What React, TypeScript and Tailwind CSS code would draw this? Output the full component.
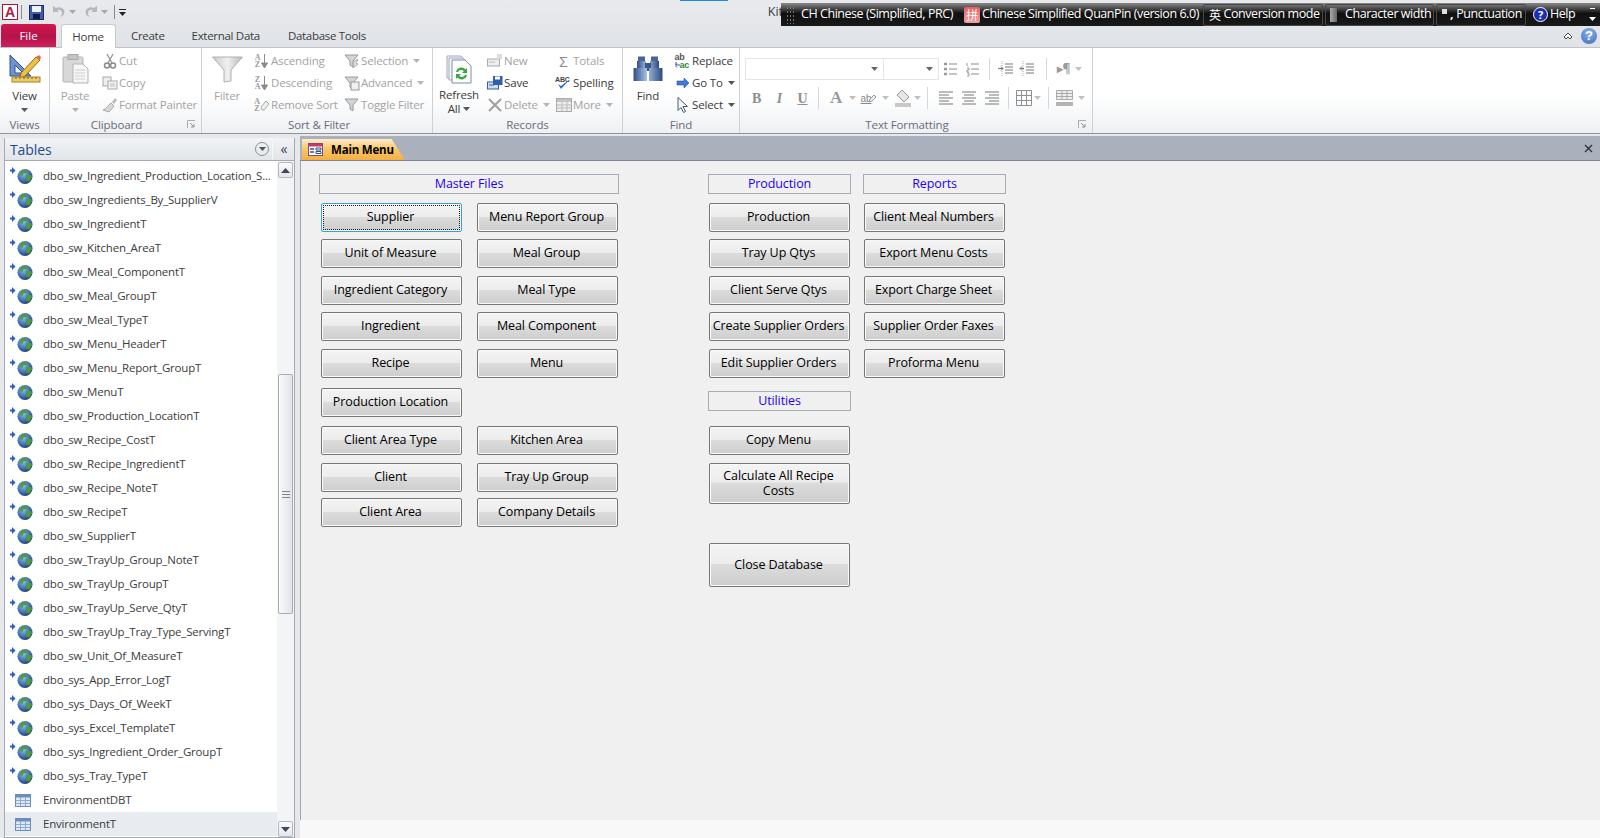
import React, { FC, ReactNode } from "react";

const tables = [
  "dbo_sw_Ingredient_Production_Location_S...",
  "dbo_sw_Ingredients_By_SupplierV",
  "dbo_sw_IngredientT",
  "dbo_sw_Kitchen_AreaT",
  "dbo_sw_Meal_ComponentT",
  "dbo_sw_Meal_GroupT",
  "dbo_sw_Meal_TypeT",
  "dbo_sw_Menu_HeaderT",
  "dbo_sw_Menu_Report_GroupT",
  "dbo_sw_MenuT",
  "dbo_sw_Production_LocationT",
  "dbo_sw_Recipe_CostT",
  "dbo_sw_Recipe_IngredientT",
  "dbo_sw_Recipe_NoteT",
  "dbo_sw_RecipeT",
  "dbo_sw_SupplierT",
  "dbo_sw_TrayUp_Group_NoteT",
  "dbo_sw_TrayUp_GroupT",
  "dbo_sw_TrayUp_Serve_QtyT",
  "dbo_sw_TrayUp_Tray_Type_ServingT",
  "dbo_sw_Unit_Of_MeasureT",
  "dbo_sys_App_Error_LogT",
  "dbo_sys_Days_Of_WeekT",
  "dbo_sys_Excel_TemplateT",
  "dbo_sys_Ingredient_Order_GroupT",
  "dbo_sys_Tray_TypeT",
  "EnvironmentDBT",
  "EnvironmentT",
];

const Caret: FC<{ color?: string; className?: string }> = ({ color = "#a8a8a8", className = "" }) => (
  <svg width="7" height="4" viewBox="0 0 7 4" className={className}>
    <path d="M0 0h7L3.5 4z" fill={color} />
  </svg>
);

const Globe: FC = () => (
  <svg width="23" height="18" viewBox="0 0 23 18">
    <defs>
      <radialGradient id="gl" cx="0.4" cy="0.35" r="0.7">
        <stop offset="0" stopColor="#8fb8e8" />
        <stop offset="0.6" stopColor="#3f6fb0" />
        <stop offset="1" stopColor="#1f3a68" />
      </radialGradient>
    </defs>
    <path d="M0 2.500h2V0L5.500 3.500 2 7V4.500H0z" fill="#2a5fc8" />
    <circle cx="15" cy="9.500" r="7.500" fill="url(#gl)" />
    <path d="M11 4c2-1.500 5-1.500 6.500 0l-1 2-3 0-1 3-2.500-1zM16 8l5 0 1 2-3 5-3-2z" fill="#4f9a3c" />
  </svg>
);

const TableIcon: FC = () => (
  <svg width="16" height="13" viewBox="0 0 16 13">
    <rect x="0.5" y="0.5" width="15" height="12" fill="#dce8f6" stroke="#6c8fb8" />
    <rect x="1" y="1" width="14" height="2.500" fill="#6c8fb8" />
    <path d="M1 6.500h14M1 9.500h14M5.500 3v9M10.500 3v9" stroke="#8dabcc" />
  </svg>
);

const Sm: FC<{ children: ReactNode; w?: number }> = ({ children, w = 16 }) => (
  <svg width={w} height="16" viewBox={`0 0 ${w} 16`}>
    {children}
  </svg>
);

const CutIcon = () => (
  <Sm>
    <path d="M5 1l5 9M11 1L6 10" stroke="#9a9a9a" strokeWidth="1.4" />
    <circle cx="5" cy="12.500" r="2.500" fill="none" stroke="#8a8a8a" strokeWidth="1.500" />
    <circle cx="11" cy="12.500" r="2.500" fill="none" stroke="#8a8a8a" strokeWidth="1.500" />
  </Sm>
);
const CopyIcon = () => (
  <Sm>
    <rect x="1" y="2" width="8" height="9" fill="#eee" stroke="#aaa" />
    <rect x="6" y="6" width="9" height="8" fill="#f4f4f4" stroke="#aaa" />
    <path d="M8 9h5M8 11h5" stroke="#bbb" />
  </Sm>
);
const BrushIcon = () => (
  <Sm>
    <path d="M9 6l3 3-5 6-6-2c3-1 5-4 8-7z" fill="#d8d8d8" stroke="#aaa" />
    <path d="M10 5l3-4 2 2-3 4z" fill="#bbb" />
  </Sm>
);
const AzLetters: FC<{ top: string; bottom: string }> = ({ top, bottom }) => (
  <span className="flex items-center gap-[1px]">
    <span className="flex flex-col font-['Liberation_Serif',serif] text-[8px] leading-[7px] font-bold text-[#9a9a9a]">
      <span>{top}</span>
      <span>{bottom}</span>
    </span>
    <svg width="7" height="15" viewBox="0 0 7 15">
      <path d="M3.500 0v11M0.500 9l3 5 3-5z" stroke="#8a8a8a" fill="#8a8a8a" />
    </svg>
  </span>
);
const EraserSort = () => (
  <span className="flex items-center">
    <span className="flex flex-col font-['Liberation_Serif',serif] text-[8px] leading-[7px] font-bold text-[#9a9a9a]">
      <span>A</span>
      <span>Z</span>
    </span>
    <svg width="9" height="12" viewBox="0 0 9 12">
      <path d="M1 8l5-6 3 3-5 6H2z" fill="#eee" stroke="#aaa" />
    </svg>
  </span>
);
const SmallFunnel: FC<{ variant?: string }> = ({ variant }) => (
  <Sm>
    <path d="M1 2h13L9 8v6l-3-2V8z" fill="#d4d4d4" stroke="#9a9a9a" />
    {variant === "sel" && <path d="M9 9l5-3-2 4 2 1-5 4 1-4z" fill="#e8e8e8" stroke="#aaa" />}
    {variant === "adv" && <rect x="7" y="7" width="8" height="8" fill="#f0f0f0" stroke="#999" />}
  </Sm>
);
const NewIcon = () => (
  <Sm>
    <rect x="0.500" y="6" width="12" height="7" fill="#eee" stroke="#aaa" />
    <path d="M2 9h6" stroke="#bbb" />
    <path d="M10 1h5v5h-5z" fill="#ddd" />
  </Sm>
);
const SaveRecordIcon = () => (
  <Sm>
    <rect x="0.500" y="7" width="11" height="7" fill="#cfe0f6" stroke="#2f5fa8" />
    <rect x="6" y="1" width="9.500" height="9" fill="#2f5fa8" />
    <rect x="8" y="1.500" width="5" height="3" fill="#fff" />
    <path d="M2 10h5" stroke="#2f5fa8" />
  </Sm>
);
const DeleteIcon = () => (
  <Sm>
    <path d="M2 2l12 12M14 2L2 14" stroke="#a2a2a2" strokeWidth="2.2" />
  </Sm>
);
const SpellIcon = () => (
  <Sm w={17}>
    <text x="0" y="7" fontSize="7" fontWeight="700" fontFamily="Liberation Sans" fill="#444">
      ABC
    </text>
    <path d="M3 9l3 5 9-10-9 7z" fill="#2f6bc4" />
  </Sm>
);
const MoreIcon = () => (
  <Sm>
    <rect x="0.500" y="1.500" width="15" height="13" fill="#eee" stroke="#aaa" />
    <rect x="1" y="2" width="14" height="3" fill="#c4c4c4" />
    <path d="M1 8h14M1 11h14M6 5v9M11 5v9" stroke="#bbb" />
  </Sm>
);
const ReplaceIcon = () => (
  <span className="relative flex w-[16px] h-[16px] font-['Liberation_Sans',sans-serif] font-bold text-[9px] leading-[8px]">
    <span className="text-[#555]">ab</span>
    <span className="absolute left-[5px] top-[8px] text-[#2f8a3a]">ac</span>
    <svg width="5" height="6" viewBox="0 0 5 6" className="absolute left-0 top-[9px]">
      <path d="M1 0v3h4M2 1.500L0 3.500l2 2" fill="none" stroke="#2f5fa8" />
    </svg>
  </span>
);
const GoToIcon = () => (
  <Sm>
    <path d="M2 6h7V3l5 5-5 5v-3H2z" fill="#3f78d8" stroke="#2a56a8" strokeWidth="0.6" />
  </Sm>
);
const SelectIcon = () => (
  <Sm>
    <path d="M3 0.500v13l3-3 2.500 5 2-1-2.500-5h4.500z" fill="#f4f6fa" stroke="#4a5a78" />
  </Sm>
);

const ViewIcon = () => (
  <svg width="32" height="30" viewBox="0 0 32 30">
    <path d="M1 1v21h21z" fill="#6f93d0" stroke="#30508e" />
    <path d="M6 11v8h8z" fill="#f4f7fb" stroke="#30508e" />
    <path d="M12 19L27 3l4 3L16 22l-5 2z" fill="#f0c040" stroke="#8a6a18" />
    <path d="M27 3l4 3 1-3-2-2z" fill="#d66" />
    <rect x="3" y="23" width="28" height="5" fill="#eecb62" stroke="#a4822a" />
    <path d="M7 23v2M11 23v2M15 23v2M19 23v2M23 23v2M27 23v2" stroke="#7a6020" />
  </svg>
);
const PasteIcon = () => (
  <svg width="27" height="30" viewBox="0 0 27 30">
    <rect x="1" y="3" width="20" height="25" rx="1" fill="#d8d8d8" stroke="#b4b4b4" />
    <rect x="6" y="0.500" width="10" height="5" fill="#c4c4c4" stroke="#aaa" />
    <path d="M11 10h10l5 5v14H11z" fill="#f6f6f6" stroke="#b4b4b4" />
    <path d="M13 16h10M13 19h10M13 22h10M13 25h10" stroke="#d0d0d0" />
  </svg>
);
const FunnelIcon = () => (
  <svg width="31" height="27" viewBox="0 0 31 27">
    <defs>
      <linearGradient id="fg" x1="0" x2="1" y1="0" y2="0">
        <stop offset="0" stopColor="#c8c8c8" />
        <stop offset="0.5" stopColor="#f0f0f0" />
        <stop offset="1" stopColor="#b8b8b8" />
      </linearGradient>
    </defs>
    <path d="M0.500 1h30L19 14v11l-7 1V14z" fill="url(#fg)" stroke="#b0b0b0" />
  </svg>
);
const RefreshIcon = () => (
  <svg width="26" height="30" viewBox="0 0 26 30">
    <path d="M1 2h14l5 5v17H1z" fill="#f4f7fb" stroke="#a0aab8" />
    <path d="M3 4h14l5 5v17H3z" fill="#f4f7fb" stroke="#a0aab8" />
    <path d="M6 6h13l6 6v17H6z" fill="#fff" stroke="#7c8ca4" />
    <path d="M10 18a5.500 5.500 0 0 1 9.500-2.500l1.500-1.500v5h-5l1.800-1.800A3.500 3.500 0 0 0 12 18z" fill="#39a840" />
    <path d="M21 21a5.500 5.500 0 0 1-9.500 2.500L10 25v-5h5l-1.800 1.800A3.500 3.500 0 0 0 19 21z" fill="#39a840" />
  </svg>
);
const BinocularsIcon = () => (
  <svg width="30" height="27" viewBox="0 0 30 27">
    <defs>
      <linearGradient id="bn" x1="0" x2="1" y1="0" y2="0">
        <stop offset="0" stopColor="#2f4f86" />
        <stop offset="0.45" stopColor="#a6bfe4" />
        <stop offset="1" stopColor="#2c4a7e" />
      </linearGradient>
    </defs>
    <rect x="5" y="0.500" width="7" height="5" fill="#4a6494" />
    <rect x="18" y="0.500" width="7" height="5" fill="#4a6494" />
    <path d="M4 5h9v7H4zM17 5h9v7h-9z" fill="url(#bn)" />
    <rect x="12" y="7" width="6" height="8" fill="#3c5688" />
    <path d="M0.500 12h13.500v13H0.500zM16 12h13.500v13H16z" fill="url(#bn)" />
  </svg>
);

const Rgp: FC<{ w: number; children: ReactNode }> = ({ w, children }) => (
  <span className="flex justify-center items-center shrink-0" style={{ width: w }}>
    {children}
  </span>
);
const Divider = () => <span className="w-[1px] h-[22px] bg-[#d4d7dc] shrink-0" />;
const ListIcon: FC<{ numbered?: boolean }> = ({ numbered }) => (
  <Sm w={14}>
    {numbered ? (
      <path d="M1 2v3M1 7h2v2H1v2h2M1 12h2v3H1" stroke="#999" fill="none" />
    ) : (
      <path d="M0 3h3M0 8h3M0 13h3" stroke="#999" strokeWidth="2.4" />
    )}
    <path d="M5 3h8M5 8h8M5 13h8" stroke="#8a8a8a" />
  </Sm>
);
const IndentIcon: FC<{ out?: boolean }> = ({ out }) => (
  <Sm>
    <path d="M7 3h8M7 6h8M7 9h8M7 12h8" stroke="#777" />
    <path d="M4 0v16" stroke="#aaa" strokeDasharray="1 1" />
    <path d={out ? "M1 7.500h4M1 7.500l2-2M1 7.500l2 2" : "M0 7.500h5M5 7.500l-2-2M5 7.500l-2 2"} stroke="#777" fill="none" />
  </Sm>
);
const AlignIcon: FC<{ mode: string }> = ({ mode }) => {
  const d =
    mode === "l"
      ? "M1 2h14M1 5h10M1 8h14M1 11h10M1 14h14"
      : mode === "c"
        ? "M1 2h14M3 5h10M1 8h14M3 11h10M1 14h14"
        : "M1 2h14M5 5h10M1 8h14M5 11h10M1 14h14";
  return (
    <Sm>
      <path d={d} stroke="#777" />
    </Sm>
  );
};

const SmallItem: FC<{ icon: ReactNode; label: string; caret?: boolean; on?: boolean; w: number }> = ({
  icon,
  label,
  caret,
  on,
  w,
}) => (
  <div className="h-[22px] flex items-center whitespace-nowrap" style={{ width: w }}>
    <span className="w-[19px] flex justify-center shrink-0">{icon}</span>
    <span className={on ? "text-[#3a3a3a]" : "text-[#a3a3a3]"}>{label}</span>
    {caret && <Caret className="ml-[5px]" color={on ? "#555" : "#b4b4b4"} />}
  </div>
);

const BigItem: FC<{ icon: ReactNode; label: string; w: number; on?: boolean; caret?: boolean; second?: string }> = ({
  icon,
  label,
  w,
  on,
  caret,
  second,
}) => (
  <div className="flex flex-col items-center shrink-0" style={{ width: w }}>
    <div className="h-[38px] flex items-center justify-center">{icon}</div>
    <span className={`leading-[15px] ${on ? "text-[#3a3a3a]" : "text-[#a3a3a3]"}`}>{label}</span>
    {second ? (
      <span className="leading-[14px] text-[#3a3a3a] flex items-center gap-[3px]">
        {second}
        <Caret color="#555" />
      </span>
    ) : (
      caret && <Caret className="mt-[5px]" color={on ? "#555" : "#b4b4b4"} />
    )}
  </div>
);

const Launcher = () => (
  <svg width="9" height="9" viewBox="0 0 9 9" className="absolute right-[5px] top-[4px]">
    <path d="M0.500 8V0.500H8" fill="none" stroke="#a8adb5" />
    <path d="M3 3l4 4M7 4v3H4" fill="none" stroke="#8d929a" />
  </svg>
);

const Group: FC<{ label: string; w: number; launcher?: boolean; labelClass?: string; children: ReactNode }> = ({
  label,
  w,
  launcher,
  labelClass = "",
  children,
}) => (
  <div className="flex flex-col shrink-0 border-r border-[#cdd1d6]" style={{ width: w }}>
    <div className="h-[68px] pt-[2px] flex">{children}</div>
    <div
      className={`relative h-[17px] text-center text-[11.5px] leading-[17px] tracking-[-0.1px] text-[#6b6d7a] ${
        launcher ? "pr-[18px]" : ""
      } ${labelClass}`}
    >
      {label}
      {launcher && <Launcher />}
    </div>
  </div>
);

const Ribbon: FC = () => (
  <div className="h-[86px] flex border-b border-[#8f949b] bg-[linear-gradient(#ffffff_0%,#ffffff_55%,#eef0f3_100%)] text-[11.5px] tracking-[-0.15px] font-['Open_Sans',sans-serif]">
    <Group label="Views" w={50}>
      <BigItem icon={<ViewIcon />} label="View" w={49} on caret />
    </Group>
    <Group label="Clipboard" w={152} launcher>
      <BigItem icon={<PasteIcon />} label="Paste" w={50} caret />
      <div className="flex flex-col">
        <SmallItem w={100} icon={<CutIcon />} label="Cut" />
        <SmallItem w={100} icon={<CopyIcon />} label="Copy" />
        <SmallItem w={100} icon={<BrushIcon />} label="Format Painter" />
      </div>
    </Group>
    <Group label="Sort & Filter" w={231} labelClass="pl-[4px]">
      <BigItem icon={<FunnelIcon />} label="Filter" w={50} />
      <div className="flex flex-col">
        <SmallItem w={90} icon={<AzLetters top="A" bottom="Z" />} label="Ascending" />
        <SmallItem w={90} icon={<AzLetters top="Z" bottom="A" />} label="Descending" />
        <SmallItem w={90} icon={<EraserSort />} label="Remove Sort" />
      </div>
      <div className="flex flex-col">
        <SmallItem w={90} icon={<SmallFunnel variant="sel" />} label="Selection" caret />
        <SmallItem w={90} icon={<SmallFunnel variant="adv" />} label="Advanced" caret />
        <SmallItem w={90} icon={<SmallFunnel />} label="Toggle Filter" />
      </div>
    </Group>
    <Group label="Records" w={190}>
      <BigItem icon={<RefreshIcon />} label="Refresh" w={52} on second="All" />
      <div className="flex flex-col">
        <SmallItem w={69} icon={<NewIcon />} label="New" />
        <SmallItem w={69} icon={<SaveRecordIcon />} label="Save" on />
        <SmallItem w={69} icon={<DeleteIcon />} label="Delete" caret />
      </div>
      <div className="flex flex-col">
        <SmallItem w={68} icon={<span className="text-[#8a8a8a] text-[15px] leading-none">Σ</span>} label="Totals" />
        <SmallItem w={68} icon={<SpellIcon />} label="Spelling" on />
        <SmallItem w={68} icon={<MoreIcon />} label="More" caret />
      </div>
    </Group>
    <Group label="Find" w={117}>
      <BigItem icon={<BinocularsIcon />} label="Find" w={50} on />
      <div className="flex flex-col">
        <SmallItem w={66} icon={<ReplaceIcon />} label="Replace" on />
        <SmallItem w={66} icon={<GoToIcon />} label="Go To" on caret />
        <SmallItem w={66} icon={<SelectIcon />} label="Select" on caret />
      </div>
    </Group>
    <Group label="Text Formatting" w={353} launcher>
      <div className="flex flex-col pl-[5px] pt-[8px]">
        <div className="flex items-center h-[22px]">
          <div className="w-[139px] h-[22px] border border-[#e2e4e8] flex items-center justify-end pr-[5px]">
            <Caret color="#666" />
          </div>
          <div className="w-[55px] h-[22px] border border-[#e2e4e8] border-l-0 flex items-center justify-end pr-[5px]">
            <Caret color="#666" />
          </div>
          <Rgp w={23}>
            <ListIcon />
          </Rgp>
          <Rgp w={21}>
            <ListIcon numbered />
          </Rgp>
          <Rgp w={13}>
            <Divider />
          </Rgp>
          <Rgp w={19}>
            <IndentIcon />
          </Rgp>
          <Rgp w={23}>
            <IndentIcon out />
          </Rgp>
          <Rgp w={17}>
            <Divider />
          </Rgp>
          <Rgp w={17}>
            <span className="text-[#9a9a9a] text-[12px] font-bold leading-none">▸¶</span>
          </Rgp>
          <Caret className="ml-[3px]" color="#c0c0c0" />
        </div>
        <div className="flex items-center h-[22px] mt-[7px] text-[#8f8f8f]">
          <Rgp w={23}>
            <span className="font-['Liberation_Serif',serif] font-bold text-[14px]">B</span>
          </Rgp>
          <Rgp w={23}>
            <span className="font-['Liberation_Serif',serif] italic font-bold text-[14px]">I</span>
          </Rgp>
          <Rgp w={23}>
            <span className="font-['Liberation_Serif',serif] underline font-bold text-[14px]">U</span>
          </Rgp>
          <Rgp w={9}>
            <Divider />
          </Rgp>
          <Rgp w={26}>
            <span className="font-['Liberation_Serif',serif] font-bold text-[17px] text-[#9a9a9a]">A</span>
          </Rgp>
          <Caret color="#c0c0c0" />
          <Rgp w={26}>
            <span className="relative font-['Liberation_Sans',sans-serif] text-[10px] underline text-[#888] pr-[6px]">
              ab
              <svg width="9" height="9" viewBox="0 0 9 9" className="absolute right-0 top-[3px]">
                <path d="M1 8l1-3 4-4 2 2-4 4z" fill="#eee" stroke="#999" />
              </svg>
            </span>
          </Rgp>
          <Caret className="mr-[3px]" color="#c0c0c0" />
          <Rgp w={22}>
            <svg width="17" height="18" viewBox="0 0 17 18">
              <path d="M7 1l7 7-5 5-7-7z" fill="#e6e6e6" stroke="#999" />
              <rect x="0" y="14" width="16" height="4" fill="#c8c8c8" />
            </svg>
          </Rgp>
          <Caret color="#c0c0c0" />
          <Rgp w={13}>
            <Divider />
          </Rgp>
          <Rgp w={23}>
            <AlignIcon mode="l" />
          </Rgp>
          <Rgp w={23}>
            <AlignIcon mode="c" />
          </Rgp>
          <Rgp w={23}>
            <AlignIcon mode="r" />
          </Rgp>
          <Rgp w={11}>
            <Divider />
          </Rgp>
          <Rgp w={20}>
            <svg width="16" height="16" viewBox="0 0 16 16">
              <path d="M0.500 0.500h15v15H0.500zM5.500 0.500v15M10.500 0.500v15M0.500 5.500h15M0.500 10.500h15" fill="none" stroke="#8f8f8f" />
            </svg>
          </Rgp>
          <Caret color="#c0c0c0" />
          <Rgp w={15}>
            <Divider />
          </Rgp>
          <Rgp w={17}>
            <svg width="17" height="16" viewBox="0 0 17 16">
              <path d="M0.500 0.500h16v9H0.500zM6 0.500v9M11 0.500v9M0.500 3.500h16M0.500 6.500h16" fill="#eee" stroke="#aaa" />
              <rect x="0" y="12" width="17" height="4" fill="#b4b4b4" />
            </svg>
          </Rgp>
          <Caret className="ml-[5px]" color="#c0c0c0" />
        </div>
      </div>
    </Group>
    <div className="flex-1" />
  </div>
);

const TopBar: FC = () => (
  <div className="h-[48px] bg-[linear-gradient(#e8eaed_0%,#e0e3e7_100%)] border-b border-[#c0c3c8] font-['Open_Sans',sans-serif] text-[11.5px] text-[#3b3b3b]">
    <div className="h-[24px] flex items-center pl-[2px] text-[#999]">
      <span className="w-[16px] h-[16px] bg-white border border-[#a4143c] flex items-center justify-center font-['Liberation_Sans',sans-serif] font-bold text-[14px] leading-none text-[#b01840]">
        A
      </span>
      <span className="w-[1px] h-[14px] bg-[#8a8a8a] ml-[3px] mr-[7px]" />
      <svg width="15" height="15" viewBox="0 0 15 15">
        <rect x="0.500" y="0.500" width="14" height="14" fill="#3f5ca8" stroke="#1c2d6a" />
        <rect x="3" y="1" width="9" height="6" fill="#eef2fa" />
        <rect x="4" y="9" width="7" height="5" fill="#111a44" />
      </svg>
      <svg width="14" height="14" viewBox="0 0 14 14" className="ml-[8px]">
        <path d="M1 1v6h6L5 5c3-1 5 1 5 3s-1 3-2 4c4-1 5-4 4-7-1-2-5-4-8-2z" fill="#b4b8bd" />
      </svg>
      <Caret className="ml-[3px] mr-[8px]" color="#a8a8a8" />
      <svg width="14" height="14" viewBox="0 0 14 14" className="-scale-x-100">
        <path d="M1 1v6h6L5 5c3-1 5 1 5 3s-1 3-2 4c4-1 5-4 4-7-1-2-5-4-8-2z" fill="#b4b8bd" />
      </svg>
      <Caret className="ml-[3px] mr-[6px]" color="#a8a8a8" />
      <span className="w-[1px] h-[14px] bg-[#8a8a8a] mr-[4px]" />
      <svg width="7" height="7" viewBox="0 0 7 7">
        <path d="M0 0h7v1H0zM0 3h7L3.5 7z" fill="#222" />
      </svg>
      <span className="ml-auto mr-[817px] text-[12.5px] text-[#3b3b3b]">Kit</span>
    </div>
    <div className="h-[23px] flex items-end pl-[1px]">
      <div className="w-[55px] h-[23px] rounded-t-[3px] bg-[linear-gradient(#d2164f_0%,#b4134a_55%,#cf1f5c_100%)] text-white flex items-center justify-center">
        File
      </div>
      <div className="ml-[5px] w-[55px] h-[24px] -mb-[1px] relative rounded-t-[3px] bg-white border border-b-0 border-[#c6c9ce] flex items-center justify-center tracking-[-0.2px] pr-[1px]">
        Home
      </div>
      <span className="ml-[15px] h-[23px] leading-[23px] tracking-[-0.3px]">Create</span>
      <span className="ml-[27px] h-[23px] leading-[23px] tracking-[-0.3px]">External Data</span>
      <span className="ml-[28px] h-[23px] leading-[23px] tracking-[-0.3px]">Database Tools</span>
      <div className="flex-1" />
      <div className="h-[23px] flex items-center pr-[3px]">
        <svg width="10" height="8" viewBox="0 0 10 8" className="mr-[8px]">
          <path d="M1 5l4-4 4 4-2 2-2-2-2 2z" fill="#fff" stroke="#444" />
        </svg>
        <span className="w-[16px] h-[16px] rounded-full bg-[radial-gradient(circle_at_50%_30%,#8fb4ea,#3a6cc0)] text-white font-bold text-[13px] leading-[16px] text-center font-['Liberation_Sans',sans-serif]">
          ?
        </span>
      </div>
    </div>
  </div>
);

const ImeFrame: FC<{ w: number; children: ReactNode }> = ({ w, children }) => (
  <div
    className="h-[22px] flex items-center border border-[#484848] rounded-[2px] mr-[2px] shrink-0"
    style={{ width: w }}
  >
    {children}
  </div>
);

const LanguageBar: FC = () => (
  <div className="absolute left-[781px] top-[3px] w-[819px] h-[23px] flex items-center bg-[linear-gradient(#8a8a8a_0%,#101010_45%,#1a1a1a_100%)] text-white text-[12.5px] tracking-[-0.45px] font-['Open_Sans',sans-serif] whitespace-nowrap">
    <span className="w-[8px] h-[18px] ml-[5px] mr-[7px] bg-[radial-gradient(#777_1px,transparent_1px)] bg-[length:3px_4px] shrink-0" />
    <span className="w-[151px] shrink-0">CH Chinese (Simplified, PRC)</span>
    <span className="ml-[12px] mr-[2px] w-[16px] h-[16px] bg-[linear-gradient(#e86060,#f0a0a0)] rounded-[2px] text-[12px] leading-[16px] text-center font-['Noto_Sans_CJK_SC',sans-serif] shrink-0">
      拼
    </span>
    <span className="w-[221px] shrink-0">Chinese Simplified QuanPin (version 6.0)</span>
    <ImeFrame w={120}>
      <span className="ml-[5px] mr-[3px] text-[12px] font-['Noto_Sans_CJK_SC',sans-serif]">英</span>
      Conversion mode
    </ImeFrame>
    <ImeFrame w={109}>
      <span className="ml-[4px] mr-[8px] w-[7px] h-[14px] bg-[linear-gradient(90deg,#aaa,#666)]" />
      Character width
    </ImeFrame>
    <ImeFrame w={90}>
      <span className="ml-[5px] w-[5px] h-[5px] mb-[6px] bg-[#ddd]" />
      <span className="mx-[3px] font-bold">,</span>
      Punctuation
    </ImeFrame>
    <span className="ml-[5px] mr-[2px] w-[15px] h-[15px] rounded-full border border-white bg-[#1c2fb0] text-center text-[11px] leading-[13px] font-bold shrink-0">
      ?
    </span>
    Help
    <span className="ml-[14px] flex flex-col items-center gap-[8px]">
      <span className="w-[5px] h-[1px] bg-white" />
      <Caret color="#fff" />
    </span>
  </div>
);

const NavPane: FC = () => (
  <div className="w-[291px] shrink-0 ml-[4px] mt-[4px] flex flex-col border-l border-r border-b border-[#a5a9b0] font-['Open_Sans',sans-serif]">
    <div className="h-[23px] flex items-center bg-[linear-gradient(#f1f3f5,#e2e5e9)] border-b border-[#a6abb2] pl-[5px] shrink-0">
      <span className="text-[14px] tracking-[-0.1px] text-[#1f4a8a] flex-1">Tables</span>
      <span className="w-[14px] h-[14px] rounded-full border border-[#8a8f96] flex items-center justify-center mr-[3px]">
        <Caret color="#555" />
      </span>
      <span className="w-[1px] h-[20px] bg-[#f6f7f8] mr-[1px]" />
      <span className="text-[#444] text-[14px] leading-none w-[20px] text-center">«</span>
    </div>
    <div className="flex-1 flex min-h-0 bg-white">
      <div className="flex-1 pt-[3px] text-[11.5px] tracking-[-0.2px] text-[#3c3c3c]">
        {tables.map((name, i) => {
          const env = name.startsWith("Environment");
          return (
            <div
              key={name}
              className={`h-[24px] flex items-center whitespace-nowrap ${i === tables.length - 1 ? "bg-[#e8ebef]" : ""}`}
            >
              <span className="w-[38px] pl-[5px] flex justify-start shrink-0">
                {env ? (
                  <span className="ml-[5px]">
                    <TableIcon />
                  </span>
                ) : (
                  <Globe />
                )}
              </span>
              {name}
            </div>
          );
        })}
      </div>
      <div className="w-[17px] shrink-0 flex flex-col bg-[#f3f4f6] pt-[1px] px-[1px]">
        <div className="h-[16px] border border-[#b4b8be] rounded-[2px] bg-[linear-gradient(#fbfbfc,#e4e6ea)] flex items-center justify-center">
          <svg width="9" height="5" viewBox="0 0 9 5">
            <path d="M0 5h9L4.500 0z" fill="#3e4a5a" />
          </svg>
        </div>
        <div className="h-[196px]" />
        <div className="h-[240px] border border-[#a8adb5] rounded-[2px] bg-[linear-gradient(90deg,#fafafb,#e0e3e8)] flex items-center justify-center">
          <span className="w-[8px] h-[7px] border-y border-[#7f858d] flex items-center">
            <span className="w-full h-[1px] bg-[#7f858d]" />
          </span>
        </div>
        <div className="flex-1" />
        <div className="h-[16px] border border-[#b4b8be] rounded-[2px] bg-[linear-gradient(#fbfbfc,#e4e6ea)] flex items-center justify-center">
          <svg width="9" height="5" viewBox="0 0 9 5">
            <path d="M0 0h9L4.500 5z" fill="#3e4a5a" />
          </svg>
        </div>
      </div>
    </div>
  </div>
);

const Btn: FC<{ label: string; className?: string; focus?: boolean }> = ({ label, className = "", focus }) => (
  <button
    className={`w-[141px] h-[29px] block rounded-[2px] border pr-[2px] pb-[2px] text-black text-[12.5px] leading-[15px] tracking-[-0.1px] text-center shadow-[inset_0_0_0_1px_#fafafa] bg-[linear-gradient(#f4f4f4_0%,#ececec_47%,#dcdcdc_48%,#cdcdcd_100%)] ${
      focus ? "border-[#35a2dc] outline-1 outline-dotted outline-[#222] -outline-offset-3" : "border-[#777]"
    } ${className}`}
  >
    {label}
  </button>
);

const Head: FC<{ label: string; w: string; className?: string }> = ({ label, w, className = "" }) => (
  <div
    className={`${w} h-[20px] border border-[#a8acb4] text-center text-[#1c00ff] text-[12.5px] leading-[18px] tracking-[-0.1px] ${className}`}
  >
    {label}
  </div>
);

const MainForm: FC = () => (
  <div className="flex-1 flex flex-col min-w-0 font-['Open_Sans',sans-serif]">
    <div className="h-[25px] shrink-0 bg-[#aab0bc] border-b border-[#7f8794] flex items-end pl-[2px] pr-[7px]">
      <div className="w-[103px] h-[21px] bg-[linear-gradient(#fdeccb_0%,#f9c86e_45%,#f4b040_100%)] [clip-path:polygon(0_0,87%_0,100%_100%,0_100%)] flex items-center pl-[6px] text-[11.5px] tracking-[-0.2px] font-bold text-black">
        <svg width="15" height="13" viewBox="0 0 15 13" className="mr-[8px] shrink-0">
          <rect x="0.500" y="0.500" width="14" height="12" fill="#fff" stroke="#7b4a80" />
          <rect x="1" y="1" width="13" height="2.500" fill="#c83a6a" />
          <path d="M2 6h4M2 9h4" stroke="#35507e" strokeWidth="1.4" />
          <path d="M8 5h5v2H8zM8 8.500h5v2H8z" fill="none" stroke="#35507e" />
        </svg>
        Main Menu
      </div>
      <div className="flex-1" />
      <svg width="9" height="9" viewBox="0 0 9 9" className="mb-[7px]">
        <path d="M1 1l7 7M8 1L1 8" stroke="#2f3540" strokeWidth="1.4" />
      </svg>
    </div>
    <div className="flex-1 bg-[#f0f0f0] flex items-start pl-[18px] pt-[13px] border-l border-[#a0a4ab]">
      <div className="flex flex-col w-[300px]">
        <Head label="Master Files" w="w-[300px]" />
        <div className="flex gap-[15px] pl-[2px] pt-[9px]">
          <div className="flex flex-col">
            <Btn label="Supplier" focus />
            <Btn label="Unit of Measure" className="mt-[7px]" />
            <Btn label="Ingredient Category" className="mt-[8px]" />
            <Btn label="Ingredient" className="mt-[7px]" />
            <Btn label="Recipe" className="mt-[8px]" />
            <Btn label="Production Location" className="mt-[10px]" />
            <Btn label="Client Area Type" className="mt-[9px]" />
            <Btn label="Client" className="mt-[8px]" />
            <Btn label="Client Area" className="mt-[6px]" />
          </div>
          <div className="flex flex-col">
            <Btn label="Menu Report Group" />
            <Btn label="Meal Group" className="mt-[7px]" />
            <Btn label="Meal Type" className="mt-[8px]" />
            <Btn label="Meal Component" className="mt-[7px]" />
            <Btn label="Menu" className="mt-[8px]" />
            <Btn label="Kitchen Area" className="mt-[48px]" />
            <Btn label="Tray Up Group" className="mt-[8px]" />
            <Btn label="Company Details" className="mt-[6px]" />
          </div>
        </div>
      </div>
      <div className="flex flex-col w-[143px] ml-[89px]">
        <Head label="Production" w="w-[143px]" />
        <div className="pl-[1px] pt-[9px] flex flex-col">
          <Btn label="Production" />
          <Btn label="Tray Up Qtys" className="mt-[7px]" />
          <Btn label="Client Serve Qtys" className="mt-[8px]" />
          <Btn label="Create Supplier Orders" className="mt-[7px]" />
          <Btn label="Edit Supplier Orders" className="mt-[8px]" />
        </div>
        <Head label="Utilities" w="w-[143px]" className="mt-[13px]" />
        <div className="pl-[1px] pt-[15px] flex flex-col">
          <Btn label="Copy Menu" />
          <Btn label="Calculate All Recipe Costs" className="mt-[8px] !h-[41px]" />
          <Btn label="Close Database" className="mt-[39px] !h-[44px]" />
        </div>
      </div>
      <div className="flex flex-col w-[143px] ml-[12px]">
        <Head label="Reports" w="w-[143px]" />
        <div className="pl-[1px] pt-[9px] flex flex-col">
          <Btn label="Client Meal Numbers" />
          <Btn label="Export Menu Costs" className="mt-[7px]" />
          <Btn label="Export Charge Sheet" className="mt-[8px]" />
          <Btn label="Supplier Order Faxes" className="mt-[7px]" />
          <Btn label="Proforma Menu" className="mt-[8px]" />
        </div>
      </div>
    </div>
    <div className="h-[18px] shrink-0 bg-[#f8f8f8]" />
  </div>
);

const App: FC = () => (
  <div className="relative w-[1600px] h-[838px] overflow-hidden bg-[#e6e8ec]">
    <div className="absolute left-[680px] top-0 w-[48px] h-[1px] bg-[#1e88e5]" />
    <TopBar />
    <Ribbon />
    <div className="flex h-[704px]">
      <NavPane />
      <div className="w-[5px] shrink-0" />
      <div className="flex-1 flex flex-col pt-[2px] min-w-0">
        <MainForm />
      </div>
    </div>
    <LanguageBar />
  </div>
);

export default App;
